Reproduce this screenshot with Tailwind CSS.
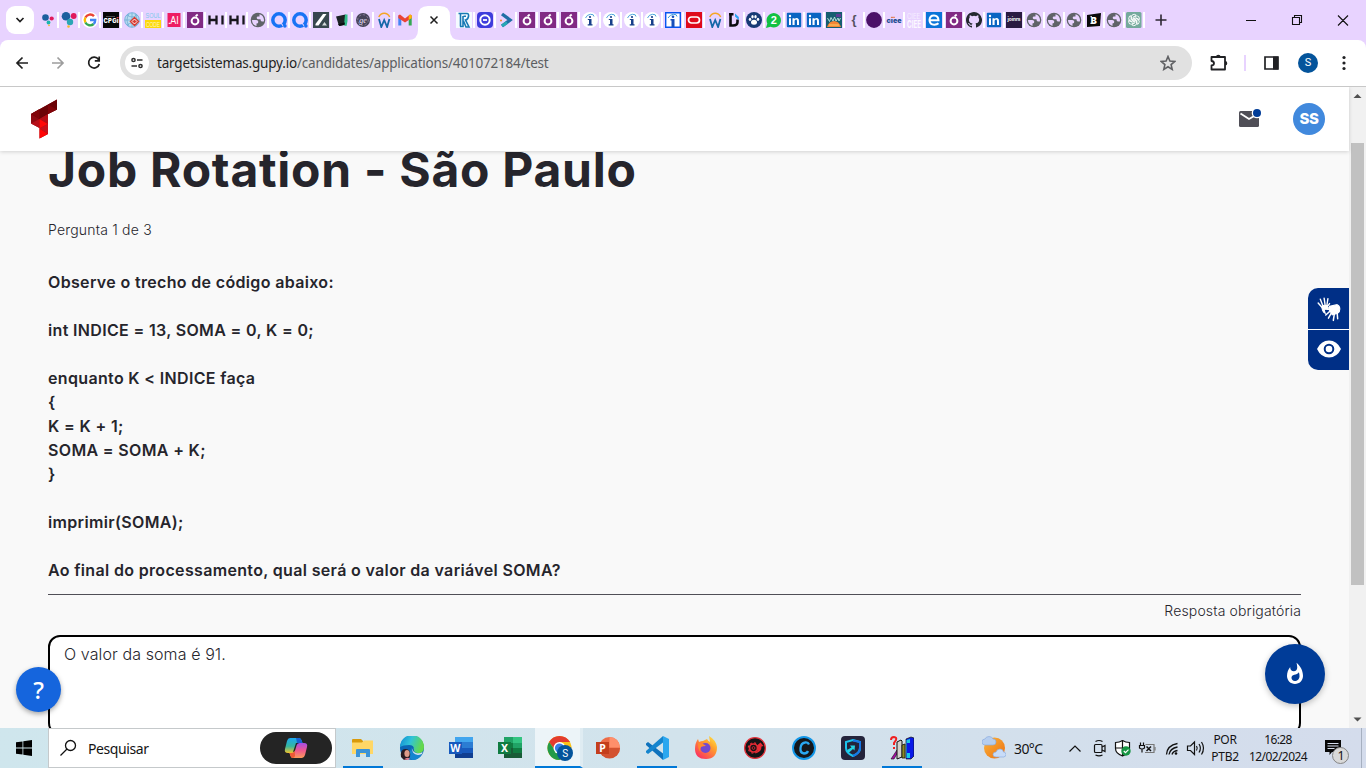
<!DOCTYPE html>
<html lang="pt-BR">
<head>
<meta charset="utf-8">
<title>Job Rotation - São Paulo</title>
<script src="https://cdn.jsdelivr.net/npm/@tailwindcss/browser@4"></script>
</head>
<body class="h-[768px] w-[1366px] overflow-hidden bg-white font-['Inter','Liberation_Sans',sans-serif] text-[#26252c]">

<svg class="hidden">
  <symbol id="dots" viewBox="0 0 16 16"><circle cx="5.500" cy="5.500" r="3.300" fill="#1c5f9e"/><circle cx="11.700" cy="6.500" r="2.100" fill="#e0195b"/><circle cx="8.500" cy="10.500" r="1.900" fill="#19b5b0"/><circle cx="9" cy="13.300" r=".9" fill="#f5b82e"/></symbol>
  <symbol id="dots2" viewBox="0 0 16 16"><circle cx="5" cy="4.300" r="4.300" fill="#1c5f9e"/><circle cx="12.700" cy="4" r="2.900" fill="#e0195b"/><circle cx="9" cy="10" r="3.200" fill="#2ba6b5"/><circle cx="7.500" cy="14.500" r="1.300" fill="#f5b82e"/></symbol>
  <symbol id="google" viewBox="0 0 16 16"><circle cx="8" cy="8" r="8" fill="#fff"/><g fill="none" stroke-width="2.400"><path d="M12 4.200A5.300 5.300 0 0 0 3.400 5.500" stroke="#ea4335"/><path d="M3.400 5.500a5.300 5.300 0 0 0 0 5" stroke="#fbbc05"/><path d="M3.400 10.500a5.300 5.300 0 0 0 8.200 1.500" stroke="#34a853"/><path d="M11.600 12A5.300 5.300 0 0 0 13.200 8H8" stroke="#4285f4"/></g></symbol>
  <symbol id="cpgi" viewBox="0 0 16 16"><path fill="#080808" d="M0 0h16v16H0z"/><path d="M3 4.500h9" stroke="#666" stroke-width=".7"/><text x=".5" y="10.500" font-size="5.800" font-weight="900" fill="#fff" font-family="Inter" textLength="15">CPGi</text><circle cx="14.500" cy="5.800" r=".8" fill="#e33"/></symbol>
  <symbol id="world" viewBox="0 0 16 16"><circle cx="8" cy="8" r="7.300" fill="#b9dcf0" stroke="#5ea7d6" stroke-width=".8"/><path d="M1 8h14M8 1v14M3 3q5 4 10 0M3 13q5-4 10 0M5 2q-4 6 0 12M11 2q4 6 0 12" stroke="#5b9ecb" stroke-width=".6" fill="none"/><path d="m10.500 4.500 5 5-5 5-5-5z" fill="#d93a31"/><path d="m10.500 7 2.500 2.500-2.500 2.500L8 9.500z" fill="none" stroke="#fff" stroke-width=".9"/></symbol>
  <symbol id="soul" viewBox="0 0 16 16"><text x=".5" y="5.800" font-size="7.500" fill="#7fcaec" font-family="Liberation Sans" textLength="15" lengthAdjust="spacingAndGlyphs">SOUL</text><path fill="#fcd90b" d="M0 8h16v8H0z"/><text x="1" y="14.500" font-size="7" fill="#fff6c0" font-family="Liberation Sans" textLength="14" lengthAdjust="spacingAndGlyphs">CODE</text></symbol>
  <symbol id="ai" viewBox="0 0 16 16"><path fill="#ee1d63" d="M1.500 1h13v14h-13z"/><text x="4.200" y="12" font-size="11" fill="#fff" font-family="Liberation Sans" textLength="8.500" lengthAdjust="spacingAndGlyphs">AI</text><path fill="#fff" d="M2.700 10.800h1.200V12H2.700z"/></symbol>
  <symbol id="gupy" viewBox="0 0 16 16"><path fill="#812a84" d="M0 0h16v16H0z"/><circle cx="8" cy="9" r="3.400" fill="none" stroke="#fff" stroke-width="2"/><path d="m8.700 4.200 2-1.700" stroke="#fff" stroke-width="1.900"/></symbol>
  <symbol id="hi" viewBox="0 0 16 16"><path d="M1.500 3.500v9M8.500 3.500v9M1.500 8h7M14.500 3.500v9" stroke="#17151d" stroke-width="2.300"/></symbol>
  <symbol id="globe" viewBox="0 0 16 16"><circle cx="8" cy="8" r="7.300" fill="#5f6368"/><path d="M2 8h4.300q1.900.1 2 1.800T6.500 11.600v2.300Q2 12.700 2 8M9.500 2.200Q13.700 3.300 14 8q0 .8-.2 1.600H12q-1.500-.2-1.500-2.400H8Q6.700 7.100 6.700 5.800T8 4.500h1.500z" fill="#e8d3ff"/></symbol>
  <symbol id="q" viewBox="0 0 16 16"><circle cx="8" cy="8" r="6.200" fill="none" stroke="#1873f5" stroke-width="3.500"/><path d="m9.500 10.500 3.500 4.500" stroke="#e8d3ff" stroke-width="1.100"/><circle cx="13.900" cy="13.900" r="1.800" fill="#1873f5"/></symbol>
  <symbol id="pen" viewBox="0 0 16 16"><path fill="#38474f" d="M0 0h16v16H0z"/><path d="M10 2h3.500L5.500 13.500H2.500V12z" fill="#fff"/><path d="m11.500 10 2.500 3.500H9z" fill="#d6dbde"/></symbol>
  <symbol id="book" viewBox="0 0 16 16"><path d="m2 4.500 9.500-2L13 12l-8 2z" fill="#1c2326"/><path d="m11 2.500 2.500 0 0 6.500-1 5-2.500-.5z" fill="#33c08b"/><path d="m4 12 7-1.500-.5 2.500-5 1z" fill="#0a0f10"/></symbol>
  <symbol id="ge" viewBox="0 0 16 16"><circle cx="8" cy="8" r="7" fill="#454358"/><circle cx="8" cy="8" r="5.300" fill="none" stroke="#9c8fb0" stroke-width=".7" stroke-dasharray="2.500 1.500"/><text x="4.300" y="10.500" font-size="8" font-style="italic" fill="#f0e4ff" font-family="Liberation Serif" textLength="7.500">ge</text></symbol>
  <symbol id="w" viewBox="0 0 16 16"><path d="M2.800 5Q4.700 1.300 8.200 1.300t5.500 3.700" stroke="#f5a623" stroke-width="1.500" fill="none"/><path d="m3 7 2.300 8 2.900-7 2.900 7 2.300-8" stroke="#1568a8" stroke-width="1.800" fill="none"/></symbol>
  <symbol id="gmail" viewBox="0 0 16 16"><path d="M1.300 13.500V4l3 2v7.500z" fill="#4285f4"/><path d="M14.700 13.500V4l-3 2v7.500z" fill="#34a853"/><path d="M1.300 3.300 3 2.500l5 4 5-4 1.700.8V6L8 10.500 1.300 6z" fill="#ea4335"/><path d="M11.700 4 13 2.500l1.700 1V6l-3 2z" fill="#fbbc04"/></symbol>
  <symbol id="r" viewBox="0 0 16 16"><path fill="#f5fbff" d="M0 0h16v16H0z"/><path d="M2.500 1.500H11q2 0 1.500 3T9.500 8l3.500 7h-3L7.500 9M4.500 1.500v13M7 4v10.500H4M7.500 4.200H10" stroke="#1879b4" stroke-width="1.600" fill="none"/></symbol>
  <symbol id="theta" viewBox="0 0 16 16"><rect width="16" height="16" rx="4" fill="#3e3cdc"/><circle cx="8" cy="8" r="4.700" fill="none" stroke="#fff" stroke-width="2"/><path d="M6 8h4" stroke="#fff" stroke-width="1.800"/></symbol>
  <symbol id="chev" viewBox="0 0 16 16"><path d="m4 2 8 6-8 6" stroke="#1e6fa5" stroke-width="3.400" fill="none"/><path d="m9 10.500-5 3.500" stroke="#27a8b5" stroke-width="3"/><circle cx="3" cy="8.500" r="1" fill="#f08a24"/></symbol>
  <symbol id="i" viewBox="0 0 16 16"><circle cx="8" cy="8" r="8" fill="#fff"/><path d="M3.500 6Q5 2.500 8.500 2.300t3.500 2.200" fill="none" stroke="#3b9bd8" stroke-width=".9"/><circle cx="8" cy="5" r="1.100" fill="#173f8a"/><path d="M5.800 7h3.700v5.300h1v1.100H5.700v-1.100h1.300V8.100H5.800z" fill="#173f8a"/></symbol>
  <symbol id="ibox" viewBox="0 0 16 16"><path d="M.7.7h14.600v14.600H.7z" fill="#fff" stroke="#0755f0" stroke-width="1.400"/><path d="M3 6Q5 2.500 8.500 2.300t3.500 2.200" fill="none" stroke="#3b9bd8"/><circle cx="8" cy="4.800" r="1.300" fill="#174fba"/><path d="M5.500 7h4v8H6.500V8.500h-1z" fill="#174fba"/></symbol>
  <symbol id="oracle" viewBox="0 0 16 16"><path fill="#df0a1c" d="M0 0h16v16H0z"/><rect x="2.500" y="5" width="11" height="6" rx="3" fill="none" stroke="#fff" stroke-width="1.700"/></symbol>
  <symbol id="d" viewBox="0 0 16 16"><path d="M4.500 1.500v12H7q4.500 0 4.500-3.500V7.500M3 2.300h4.500" fill="none" stroke="#0b0b0f" stroke-width="2.600"/><path d="m9 1.500 3.800 3.500v3L9 4.500z" fill="#2aa4f4"/></symbol>
  <symbol id="paw" viewBox="0 0 16 16"><circle cx="8" cy="8" r="8" fill="#173a75"/><g fill="#fff"><ellipse cx="8" cy="10.300" rx="3" ry="2.500"/><ellipse cx="4" cy="7.300" rx="1.200" ry="1.600"/><ellipse cx="6.500" cy="4.800" rx="1.200" ry="1.700"/><ellipse cx="9.500" cy="4.800" rx="1.200" ry="1.700"/><ellipse cx="12" cy="7.300" rx="1.200" ry="1.600"/></g></symbol>
  <symbol id="wa" viewBox="0 0 16 16"><path d="M0 16 1.300 11.500A7.200 7.200 0 1 1 4.500 14.700z" fill="#12c143"/><text x="4.700" y="11.800" font-size="11" font-weight="700" fill="#fff" font-family="Liberation Sans">2</text></symbol>
  <symbol id="in" viewBox="0 0 16 16"><rect x=".8" y=".8" width="14.400" height="14.400" rx="1" fill="#0a66c2"/><path d="M3 6.200h2V13H3zM6.500 6.200h2V7q2.500-2 4.200.3.400.7.300 5.700h-2V9q-.2-2-1.500-1.300-.9.300-.9 1.300v4H6.500z" fill="#fff"/><circle cx="4" cy="4" r="1.200" fill="#fff"/></symbol>
  <symbol id="sun" viewBox="0 0 16 16"><path fill="#155e70" d="M0 0h16v16H0z"/><path d="M1 15q2-6 7-6t7 6z" fill="#f58634"/><path d="m1.500 6 2 3.500L5 5.500l2 3.500 1.500-4L10 9l2-3 1 3 1.500-3" stroke="#bfe6df" stroke-width=".9" fill="none"/><path d="M10 2h5v3h-5z" fill="#5a3d95"/><path d="M3 12.500h10v1H3z" fill="#fbd36a"/></symbol>
  <symbol id="brace" viewBox="0 0 16 16"><text x="5.500" y="12" font-size="13" font-weight="700" fill="#55515f" font-family="Liberation Sans">{</text></symbol>
  <symbol id="purple" viewBox="0 0 16 16"><circle cx="8" cy="8" r="7.900" fill="#4b1168"/></symbol>
  <symbol id="ciee" viewBox="0 0 16 16"><text x=".5" y="11" font-size="6.500" font-weight="900" fill="#1e4f93" font-family="Inter" textLength="15" lengthAdjust="spacingAndGlyphs">ciee</text><path d="M5 5.300h4" stroke="#ef7c45"/></symbol>
  <symbol id="cieew" viewBox="0 0 16 16"><text x="1" y="6.500" font-size="7" font-weight="400" fill="#f6efff" font-family="Inter" textLength="13" lengthAdjust="spacingAndGlyphs">CIEE</text><text x="1" y="15.500" font-size="10.500" font-weight="700" fill="#fcf9ff" font-family="Inter" textLength="14" lengthAdjust="spacingAndGlyphs">CIEE</text></symbol>
  <symbol id="e" viewBox="0 0 16 16"><path fill="#0b74d8" d="M0 0h16v16H0z"/><path d="M3.500 8.300h9Q12.300 3.500 8 3.400T3.500 8q0 4.700 4.800 4.700 2.700 0 4.200-1.400" fill="none" stroke="#fff" stroke-width="2"/></symbol>
  <symbol id="gh" viewBox="0 0 16 16"><path fill="#24292f" d="M8 0C3.580 0 0 3.580 0 8c0 3.540 2.290 6.530 5.470 7.590.4.070.550-.17.550-.38 0-.19-.01-.82-.01-1.490-2.010.370-2.530-.49-2.690-.94-.09-.23-.48-.94-.82-1.130-.28-.15-.68-.52-.01-.53.630-.01 1.080.580 1.230.820.720 1.210 1.870.870 2.330.660.070-.52.280-.87.510-1.070-1.780-.2-3.640-.89-3.640-3.950 0-.87.310-1.590.820-2.150-.08-.2-.36-1.020.080-2.120 0 0 .67-.21 2.200.820a7.500 7.500 0 0 1 4 0c1.530-1.040 2.200-.82 2.200-.82.440 1.100.160 1.920.080 2.120.510.560.820 1.270.820 2.150 0 3.070-1.870 3.750-3.650 3.950.290.250.540.730.540 1.480 0 1.070-.01 1.930-.01 2.200 0 .21.150.460.550.380A8 8 0 0 0 8 0"/></symbol>
  <symbol id="joinrs" viewBox="0 0 16 16"><path fill="#2a1b42" d="M0 0h16v16H0z"/><text x="1.500" y="9.300" font-size="4.800" font-weight="700" fill="#fff" font-family="Inter" textLength="13">joinrs</text></symbol>
  <symbol id="b" viewBox="0 0 16 16"><path d="m1 3 14-2-1 13-13 1z" fill="#0a0a0a"/><path d="M4.500 4.700h1.300M4.500 11.300h1.300" stroke="#fff" stroke-width="1.300"/><text x="4.800" y="11.500" font-size="9" font-weight="900" fill="#fff" font-family="Inter">B</text></symbol>
  <symbol id="gpt" viewBox="0 0 16 16"><rect width="15.500" height="16" rx="1.500" fill="#74aa9c"/><g fill="none" stroke="#fff" stroke-width=".9"><g id="petal"><path d="M5.500 7V4.500q.5-2.300 2.700-2.200 1.300.1 2 1L7 5.200v4.300"/></g><use href="#petal" transform="rotate(60 8 8)"/><use href="#petal" transform="rotate(120 8 8)"/><use href="#petal" transform="rotate(180 8 8)"/><use href="#petal" transform="rotate(240 8 8)"/><use href="#petal" transform="rotate(300 8 8)"/></g></symbol>
</svg>

<!-- Tab strip -->
<header class="flex h-10 items-center bg-[#e8d3ff]">
  <button class="ml-[6px] mr-[6px] flex size-7 shrink-0 items-center justify-center rounded-[9px] bg-white"><svg class="size-3" viewBox="0 0 12 12"><path d="m2.500 4 3.500 3.500L9.500 4" fill="none" stroke="#1f1f1f" stroke-width="1.700"/></svg></button>
  <nav class="flex w-[378px] shrink-0 *:mr-[2px] *:h-4 *:w-[19px] *:shrink-0 *:border-r-2 *:border-white [&>svg:last-child]:border-transparent">
    <svg><use href="#dots" width="16" height="16"/></svg><svg><use href="#dots2" width="16" height="16"/></svg><svg><use href="#google" width="16" height="16"/></svg><svg><use href="#cpgi" width="16" height="16"/></svg><svg><use href="#world" width="16" height="16"/></svg><svg><use href="#soul" width="16" height="16"/></svg><svg><use href="#ai" width="16" height="16"/></svg><svg><use href="#gupy" width="16" height="16"/></svg><svg><use href="#hi" width="16" height="16"/></svg><svg><use href="#hi" width="16" height="16"/></svg><svg><use href="#globe" width="16" height="16"/></svg><svg><use href="#q" width="16" height="16"/></svg><svg><use href="#q" width="16" height="16"/></svg><svg><use href="#pen" width="16" height="16"/></svg><svg><use href="#book" width="16" height="16"/></svg><svg><use href="#ge" width="16" height="16"/></svg><svg><use href="#w" width="16" height="16"/></svg><svg><use href="#gmail" width="16" height="16"/></svg>
  </nav>
  <svg class="-ml-[10px] -mr-[12px] h-10 w-[56px] shrink-0" viewBox="0 0 56 40"><path d="M0 40q10 0 10-10V16Q10 6 20 6h12q10 0 10 10v14q0 10 10 10z" fill="#fff"/><path d="m22.500 16.500 7 7m0-7-7 7" stroke="#1f1f1f" stroke-width="1.500"/></svg>
  <nav class="ml-[4px] flex w-[290px] shrink-0 *:mr-[1.950px] *:h-4 *:w-[19px] *:shrink-0 *:border-r-2 *:border-white">
    <svg><use href="#r" width="16" height="16"/></svg><svg><use href="#theta" width="16" height="16"/></svg><svg><use href="#chev" width="16" height="16"/></svg><svg><use href="#gupy" width="16" height="16"/></svg><svg><use href="#gupy" width="16" height="16"/></svg><svg><use href="#gupy" width="16" height="16"/></svg><svg><use href="#i" width="16" height="16"/></svg><svg><use href="#i" width="16" height="16"/></svg><svg><use href="#i" width="16" height="16"/></svg><svg><use href="#i" width="16" height="16"/></svg><svg><use href="#ibox" width="16" height="16"/></svg><svg><use href="#oracle" width="16" height="16"/></svg><svg><use href="#w" width="16" height="16"/></svg><svg class="w-[17px]!"><use href="#d" x="-2" width="16" height="16"/></svg>
  </nav>
  <nav class="flex w-[406px] shrink-0 *:mr-px *:h-4 *:w-[19px] *:shrink-0 *:border-r-2 *:border-white">
    <svg><use href="#paw" width="16" height="16"/></svg><svg><use href="#wa" width="16" height="16"/></svg><svg><use href="#in" width="16" height="16"/></svg><svg><use href="#in" width="16" height="16"/></svg><svg><use href="#sun" width="16" height="16"/></svg><svg><use href="#brace" width="16" height="16"/></svg><svg><use href="#purple" width="16" height="16"/></svg><svg><use href="#ciee" width="16" height="16"/></svg><svg><use href="#cieew" width="16" height="16"/></svg><svg><use href="#e" width="16" height="16"/></svg><svg><use href="#gupy" width="16" height="16"/></svg><svg><use href="#gh" width="16" height="16"/></svg><svg><use href="#in" width="16" height="16"/></svg><svg><use href="#joinrs" width="16" height="16"/></svg><svg><use href="#globe" width="16" height="16"/></svg><svg><use href="#globe" width="16" height="16"/></svg><svg><use href="#globe" width="16" height="16"/></svg><svg><use href="#b" width="16" height="16"/></svg><svg><use href="#globe" width="16" height="16"/></svg><svg><use href="#gpt" width="16" height="16"/></svg>
  </nav>
  <svg class="ml-auto h-10 w-[212px] shrink-0" viewBox="0 0 212 40" fill="none" stroke="#111"><path d="M1.500 20h11M7 14.500v11" stroke="#2c2733" stroke-width="1.600"/><path d="M92 20.500h10M138.500 17.500h7v7h-7zM140.500 17.500v-2h7v7h-2M184 15.500l10 10m0-10-10 10" stroke-width="1.100"/></svg>
</header>

<!-- Toolbar -->
<div class="bg-[#e8d3ff]">
<div class="flex h-[47px] items-center rounded-t-lg border-b border-[#c8c8c8] bg-white">
  <svg class="h-[46px] w-[120px] shrink-0" viewBox="0 0 120 46" fill="none" stroke-width="1.700"><path d="M28 23H17m5.500-5.500L17 23l5.500 5.500" stroke="#1f1f1f"/><path d="M52 23h11m-5.500-5.500L63 23l-5.500 5.500" stroke="#9d9d9d"/><path d="M98.500 19.500a5.400 5.400 0 1 0 .8 4.500M99.200 16.500v4.300h-4.400" stroke="#1f1f1f"/></svg>
  <div class="flex h-[34px] w-[1072px] shrink-0 items-center rounded-full bg-[#e1e1e1] pl-[5px] pr-4">
    <span class="flex size-6 items-center justify-center rounded-full bg-white"><svg class="size-4" viewBox="0 0 16 16" fill="none" stroke="#303030" stroke-width="1.500"><circle cx="4.500" cy="5" r="1.600"/><path d="M8 5h5.500M2.500 11H8"/><circle cx="11.500" cy="11" r="1.600"/></svg></span>
    <span class="ml-2 whitespace-nowrap font-['Noto_Sans',sans-serif] text-[13.500px] tracking-[-0.190px] text-[#1f1f1f]">targetsistemas.gupy.io<span class="text-[#5c5e62]">/candidates/applications/401072184/test</span></span>
    <svg class="ml-auto size-4" viewBox="0 0 16 16"><path d="m8 1.500 1.900 4.500 4.900.4-3.700 3.200 1.100 4.800L8 11.800l-4.200 2.600 1.100-4.800L1.200 6.400 6.100 6z" fill="none" stroke="#5f6063" stroke-width="1.600"/></svg>
  </div>
  <svg class="ml-[17px] size-5" viewBox="0 0 20 20"><path d="M2.500 4H16v12.500H2.500v-4q2.500-.4 2.500-2.300T2.500 8z" fill="none" stroke="#202124" stroke-width="1.800" stroke-linejoin="round"/><path d="M7 4a2.300 2.300 0 0 1 4.600 0zM16 8a2.300 2.300 0 0 1 0 4.600z" fill="#202124"/></svg>
  <span class="ml-[15px] h-4 w-[2px] bg-[#e8d3ff]"></span>
  <svg class="ml-[18px] h-4 w-[15px]" viewBox="0 0 15 16"><path d="M1 2h13v12H1z" fill="#fff" stroke="#202124" stroke-width="1.700"/><path d="M9 1.500h5v13H9z" fill="#202124"/></svg>
  <span class="ml-[19px] flex size-5 items-center justify-center rounded-full bg-[#04549b] font-['Roboto',sans-serif] text-[11px] text-white">S</span>
  <svg class="ml-[23px] h-4 w-[6px]" viewBox="0 0 6 16" fill="#202124"><circle cx="3" cy="2.500" r="1.600"/><circle cx="3" cy="8" r="1.600"/><circle cx="3" cy="13.500" r="1.600"/></svg>
</div>
</div>

<!-- Page viewport -->
<div class="relative flex h-[641px] overflow-hidden bg-[#f9f9f9]">
  <div class="flex w-[1349px] flex-col">
    <div class="z-10 flex h-16 shrink-0 items-center bg-white pl-[30px] pr-6 shadow-[0_1px_4px_rgba(0,0,0,0.16)]">
      <svg class="h-10 w-7" viewBox="0 0 28 40"><path d="M1 15 27 0.500v10L18 15v20l-8.500 4.500V29L1 24.500z" fill="#8e0a12"/><path d="m1 15 26-14.500v10L18 15 9.500 20z" fill="#6b0206"/><path d="m1 15 8.500-5v10zM18 15l0-9.500 9 5z" fill="#810409"/><path d="M9.500 20 18 15v10z" fill="#b30d16"/><path d="m1 24.500 8.500-4.500v9z" fill="#b70f19"/><path d="m9.500 20 8.500 5-8.500 4.500z" fill="#ff0808"/><path d="m9.500 29.500 8.500-4.500v5z" fill="#e20610"/><path d="m18 25v10l-8.500-5.500z" fill="#c9101a"/><path d="m9.500 29.500 8.500 5.500-8.500 4.500z" fill="#ff0505"/></svg>
      <svg class="mb-[4px] ml-auto h-6 w-6" viewBox="0 0 24 24"><rect x="1" y="6" width="20" height="16" rx="1.500" fill="#504f57"/><path d="m2.500 8.500 8.500 5.500 7-4" fill="none" stroke="#fff" stroke-width="1.900"/><circle cx="19" cy="8" r="5.300" fill="#fff"/><circle cx="19" cy="8" r="4" fill="#003c98"/></svg>
      <span class="ml-[31px] flex size-8 items-center justify-center rounded-full bg-[#4189dd] text-[15px] font-extrabold tracking-[-0.300px] text-white">SS</span>
    </div>
    <main class="pl-12 pr-12">
      <h1 class="-mt-[11px] h-[60px] whitespace-nowrap text-[48px] font-bold leading-[60px] tracking-[0.730px]">Job Rotation - São Paulo</h1>
      <p class="mt-[20px] text-[14px] font-light leading-5 tracking-[0.200px]">Pergunta 1 de 3</p>
      <div class="mt-[30px] whitespace-pre-line text-[16px] font-semibold leading-6 tracking-[0.340px]">Observe o trecho de código abaixo:

int INDICE = 13, SOMA = 0, K = 0;

enquanto K &lt; INDICE faça
{
K = K + 1;
SOMA = SOMA + K;
}

imprimir(SOMA);

Ao final do processamento, qual será o valor da variável SOMA?</div>
      <hr class="mt-3 border-[#504f57]">
      <p class="mt-[6px] text-right text-[14px] font-light leading-5 tracking-[0.150px]">Resposta obrigatória</p>
      <div class="mt-[14px] h-[100px] rounded-xl border-2 border-black bg-white px-[14px] py-[5px] text-[16px] font-light leading-6 tracking-[0.100px]">O valor da soma é 91.</div>
    </main>
  </div>
  <!-- Scrollbar -->
  <div class="flex w-[17px] flex-col items-center bg-[#f1f1f1]">
    <svg class="h-[17px] w-[17px]" viewBox="0 0 17 17"><path d="m4.500 11 4-4 4 4z" fill="#505050"/></svg>
    <div class="mt-[39px] h-[442px] w-[13px] bg-[#c1c1c1]"></div>
    <svg class="mt-auto h-[17px] w-[17px]" viewBox="0 0 17 17"><path d="m4.500 6.500 4 4 4-4z" fill="#505050"/></svg>
  </div>
  <!-- Accessibility buttons -->
  <div class="absolute right-[17px] top-[201px] flex h-[82px] w-[41px] flex-col gap-px overflow-hidden rounded-l-[10px] bg-white">
    <div class="flex h-[41px] items-center justify-center bg-[#002f86]"><svg class="size-[26px]" viewBox="0 0 24 24" fill="none" stroke="#fff" stroke-linecap="round"><path d="M5.500 9.500q2-1.500 5-.5v2.500l-3 1 1 3.500q-3-1.500-3-6.500" fill="#fff" stroke-width="1"/><path d="m6 11-4-4.500M6.500 9.500 4 3M8.500 9l-1-7M10 9l1-6.500M10 10.500l2.500-3.500" stroke-width="1.300"/><path d="m12.500 9.500 7-1.500q2.500 1 2.500 4t-2 4l-5 1.500-2.500-4.500z" fill="#fff" stroke-width="1"/><path d="m13 10.500-4.500 1.500 5 .5m0 1-4.500 4m5.500-2.500-3 5.500m5.500-4.500-1 6.500m3.500-7.500.5 6" stroke-width="1.400"/></svg></div>
    <div class="flex h-10 items-center justify-center bg-[#002f86]"><svg class="mb-[2px] h-[18px] w-6" viewBox="0 0 24 18"><path d="M0 9Q4 .5 12 .5T24 9q-4 8.500-12 8.500T0 9" fill="#fff"/><circle cx="12" cy="9" r="4.300" fill="#fff" stroke="#002f86" stroke-width="2"/></svg></div>
  </div>
  <button class="absolute left-4 top-[580px] flex size-[45px] items-center justify-center rounded-full bg-[#1565dd] font-['Noto_Sans',sans-serif] text-[24px] font-medium text-white shadow-[0_2px_5px_rgba(0,0,0,0.35)]">?</button>
  <button class="absolute left-[1265px] top-[557px] flex size-[60px] items-center justify-center rounded-full bg-[#003c98] shadow-[0_2px_6px_rgba(0,0,0,0.25)]"><svg class="size-6" viewBox="0 0 24 24"><path fill="#fff" d="M13.500.670s.740 2.650.740 4.800c0 2.060-1.350 3.730-3.410 3.730-2.070 0-3.630-1.670-3.630-3.730l.030-.360C5.210 7.510 4 10.620 4 14c0 4.420 3.580 8 8 8s8-3.580 8-8C20 8.610 17.410 3.800 13.500.670zM11.710 19c-1.780 0-3.220-1.400-3.220-3.140 0-1.620 1.050-2.760 2.810-3.120 1.770-.360 3.600-1.210 4.620-2.580.390 1.290.590 2.650.590 4.040 0 2.650-2.150 4.800-4.800 4.800z"/></svg></button>
</div>

<!-- Taskbar -->
<footer class="flex h-10 bg-linear-to-r from-[#cfe6ed] via-[#d2e3ec] to-[#d4dcec] font-['Noto_Sans',sans-serif] text-[#141414]">
  <div class="flex w-12 items-center justify-center"><svg class="size-4" viewBox="0 0 16 16"><path d="M0 2.300 6.500 1.400v6.200H0zM7.300 1.300 16 0v7.600H7.300zM0 8.400h6.500v6.200L0 13.700zM7.300 8.400H16V16l-8.700-1.300z"/></svg></div>
  <div class="flex w-[288px] items-center border border-[#c5c9cb] bg-white pl-[10px] pr-[3px]">
    <svg class="size-[18px]" viewBox="0 0 18 18" fill="none" stroke="#111" stroke-width="1.300"><circle cx="11.500" cy="6.500" r="5"/><path d="m8 10-6.500 6.500"/></svg>
    <span class="ml-[11px] text-[14px] tracking-[-0.400px]">Pesquisar</span>
    <span class="ml-auto flex h-8 w-[72px] items-center justify-center rounded-full bg-[#242424]"><svg class="h-[22px] w-6" viewBox="0 0 24 22">
      <defs><linearGradient id="ca" x1="0" y1="0" x2="0" y2="1"><stop stop-color="#1ba8f0"/><stop offset=".55" stop-color="#35b6a0"/><stop offset="1" stop-color="#f2c52c"/></linearGradient><linearGradient id="cb" x1="0" y1="0" x2="0" y2="1"><stop stop-color="#a34de8"/><stop offset=".5" stop-color="#f0588e"/><stop offset="1" stop-color="#fb9b5a"/></linearGradient></defs>
      <path d="M6 1h9q2 0 2.700 2.500L18.500 6H16q-2 0-2.500 2l-1.700 6q-.8 2-3 2H4q-4 0-3-4l2-8q.8-3 3-3" fill="url(#ca)"/><path d="M12 1h3q2 0 2.700 2.500L18.500 6H16q-2 0-2.500 2z" fill="#1761d3"/><path d="M18 21H9q-2 0-2.700-2.500L5.500 16H8q2 0 2.700-2l1.700-6q.8-2 3-2H20q4 0 3 4l-2 8q-.8 3-3 3" fill="url(#cb)"/><path d="M5.500 16H8q2 0 2.700-2l.3 5q-.5 2-2.500 2-1.500-.2-2.200-2.500z" fill="#ee5a35"/><path d="m9 15 3-9h3.500q-2 0-2.800 2l-1.500 5q-.6 2-2.200 2" fill="#242424"/></svg></span>
  </div>
  <nav class="ml-[2px] flex w-[588px] *:flex *:h-10 *:w-[49px] *:items-center *:justify-center">
    <div><span class="flex h-10 w-10 items-center justify-center border-b-2 border-[#0078d7]"><svg class="mt-[2px] h-6 w-6" viewBox="0 0 24 24"><path d="M1 4q0-1 1-1h8l2 2v4H1z" fill="#d99a0b"/><path d="M1 6.500h10l2-2h9V18H1z" fill="#ffd766"/><path d="M5 21v-7q0-1 1-1h12q1 0 1 1v7h-4v-4H9v4z" fill="#3c93d6"/></svg></span></div>
    <div><svg class="size-6" viewBox="0 0 24 24"><defs><linearGradient id="ed" x1="0" y1="0" x2="1" y2=".3"><stop stop-color="#0e8ad6"/><stop offset=".5" stop-color="#31c3d7"/><stop offset="1" stop-color="#64d84b"/></linearGradient></defs><circle cx="12" cy="12" r="12" fill="#0b66b5"/><path d="M0 11A12 12 0 0 1 24 11q0 7-7 6-4-1-3-4 0-4-5-4-6 0-9 2" fill="url(#ed)"/><path d="M12 11q-2 6 5 8 3 0 5-1-3 6-10 6-5-3-2-9z" fill="#1685d0"/><path d="M13.500 11.500q-2 4 2.500 5.500 4 1 6.500-1l-.5 2q-5 2-8-.500t-.5-6" fill="#d1e5ed"/><path d="M1 21q-1-8 4.500-8 5.500 0 4.500 8l-3 3H4z" fill="#281b22"/><ellipse cx="7" cy="17.500" rx="2.600" ry="3.500" fill="#dc9a88"/><path d="M4 23.500q3-3 6-1l-2 1.500z" fill="#df7f91"/></svg></div>
    <div><svg class="h-6 w-6" viewBox="0 0 24 24"><path d="M6 1h18v6H6z" fill="#41a5ee"/><path d="M6 6h18v6H6z" fill="#2b7cd3"/><path d="M6 12h18v5H6z" fill="#185abd"/><path d="M6 17h18v5H6z" fill="#103f91"/><path d="M0 6h13v12H0z" fill="#185abd"/><text x="1.300" y="15.800" font-size="10.500" font-weight="700" fill="#fff" font-family="Noto Sans">W</text></svg></div>
    <div><svg class="h-6 w-6" viewBox="0 0 24 24"><path d="M6 1h9v7H6z" fill="#21a366"/><path d="M15 1h9v7h-9z" fill="#33c481"/><path d="M6 7h9v6H6z" fill="#107c41"/><path d="M15 7h9v6h-9z" fill="#21a366"/><path d="M6 12h18v10H6z" fill="#185c37"/><path d="M15 12h9v5h-9z" fill="#107c41"/><path d="M0 6h13v12H0z" fill="#107c41"/><text x="3" y="15.800" font-size="10.500" font-weight="700" fill="#fff" font-family="Noto Sans">X</text></svg></div>
    <div class="ml-px w-[48px]! border-r-[3px] border-b-2 border-r-[#dfecf2] border-b-[#0078d7] bg-[#ecf4f8] pl-[4px]"><svg class="mt-px size-[26px]" viewBox="0 0 26 26"><circle cx="12.500" cy="13" r="12" fill="#fbc116"/><path d="M2.100 7A12 12 0 0 1 23 7H12.500L8 15z" fill="#e33b2e"/><path d="M2.100 7A12 12 0 0 0 12.500 25l5-9-9 0z" fill="#229a49"/><circle cx="12.500" cy="13" r="6" fill="#fff"/><circle cx="12.500" cy="13" r="4.600" fill="#397ee8"/><circle cx="18" cy="18" r="8" fill="#04549b"/><text x="15.200" y="21.700" font-size="10" fill="#fff" font-family="Roboto">S</text></svg></div>
    <div><svg class="h-6 w-6" viewBox="0 0 24 24"><circle cx="13.500" cy="11.500" r="10.500" fill="#ed6c47"/><path d="M13.500 1A10.500 10.500 0 0 1 24 11.500H13.500z" fill="#ff8f6b"/><path d="M3 12h21a10.500 10.500 0 0 1-21 0" fill="#d35230"/><path d="M0 6h13v12H0z" fill="#c43e1c"/><text x="3.300" y="15.800" font-size="10.500" font-weight="700" fill="#fff" font-family="Noto Sans">P</text></svg></div>
    <div><span class="flex h-10 w-10 items-center justify-center border-b-2 border-[#0078d7]"><svg class="mt-[2px] size-6" viewBox="0 0 24 24"><path d="m18 0 6 3v18l-6 3z" fill="#2ba7ef"/><path d="m1 7.500 2-1.500L18 17.500V24L1 9z" fill="#0e72bd"/><path d="m1 16.500 2 1.500L18 6.500V0L1 15z" fill="#1585ce"/></svg></span></div>
    <div><svg class="size-6" viewBox="0 0 24 24"><defs><linearGradient id="ff" x1="1" y1="0" x2=".2" y2="1"><stop stop-color="#fff04a"/><stop offset=".4" stop-color="#ffa02c"/><stop offset="1" stop-color="#fb2e62"/></linearGradient></defs><path d="M13 3q1 2 3 3l-1-6q7 4 8 11 0 12-11 12T1 13q0-6 3-10l1 3q2-1 4-1z" fill="url(#ff)"/><circle cx="11.500" cy="12" r="5" fill="#7249cf"/><path d="M4 7q5 0 8 3-3 0-5 1-2 3 0 5-3-1-3-9" fill="#ff8a30"/></svg></div>
    <div><svg class="size-6" viewBox="0 0 24 24"><circle cx="12" cy="12" r="10.400" fill="#141416" stroke="#e2323b" stroke-width="1.300"/><circle cx="10.500" cy="12" r="4" fill="none" stroke="#e62b35" stroke-width="1.700"/><circle cx="10.500" cy="12" r="5.200" fill="none" stroke="#e62b35" stroke-width="1.200" stroke-dasharray="2 2.100"/><circle cx="10.500" cy="12" r="1.400" fill="none" stroke="#e62b35" stroke-width=".8"/><path d="m14 9.500 3.500-3 3 3.500-2 .5q0 5-5 6.500 2-4 1.500-7" fill="#e62b35"/></svg></div>
    <div><svg class="size-6" viewBox="0 0 24 24"><circle cx="12" cy="12" r="11" fill="#15171b" stroke="#1397e8" stroke-width="1.900"/><path d="M17 8.500q-1-2.500-4-2-4 .5-4.500 5.500T12 17.500q3 0 4-2.500" fill="none" stroke="#2aa8f2" stroke-width="2.300"/></svg></div>
    <div><svg class="size-6" viewBox="0 0 24 24"><rect width="24" height="24" rx="4" fill="#24243b"/><path d="m12 4 7 2v6q0 5-7 8-7-3-7-8V6z" fill="none" stroke="#1bc4ee" stroke-width="2"/><path d="M12 4.500 19 6v6q0 5-7 8" fill="none" stroke="#1676e8" stroke-width="2"/><path d="m6 14 4.500-2.500L9 9.500l5 0-.5 5-1.500-1.500-4.500 4z" fill="#25d4e5"/></svg></div>
    <div><span class="flex h-10 w-10 items-center justify-center border-b-2 border-[#0078d7]"><svg class="mt-[2px] size-6" viewBox="0 0 24 24"><path d="m1 23 6-9 1 2-4 7z" fill="#a50fa4" stroke="#111" stroke-width=".6"/><path d="M1 4q0-3 3-3 3 .2 2 3L4 7v2m0 2v2" fill="none" stroke="#f02020" stroke-width="2"/><path d="m7 6 4-2 1 1v16l-5 2z" fill="#d3d3cc" stroke="#111"/><path d="m12 9 3-1v14h-3z" fill="#8b8b22" stroke="#111" stroke-width=".8"/><path d="m16 3 5-2 3 1v18l-3 3h-5z" fill="#0919e8" stroke="#111" stroke-width=".7"/><path d="M16.500 4 20 3v19h-3.500z" fill="#17c8e8"/><path d="M17 7h3v10h-3z" fill="#0919e8"/></svg></span></div>
  </nav>
  <div class="ml-auto flex w-[384px] items-center">
    <svg class="size-6" viewBox="0 0 24 24"><defs><linearGradient id="sn" x1="0" y1="0" x2="1" y2="1"><stop stop-color="#fbb53d"/><stop offset="1" stop-color="#ec6f10"/></linearGradient></defs><circle cx="12.500" cy="12" r="10.500" fill="url(#sn)"/><path d="M3 9q-3 0-3-3t3-3q1-2.500 4-2.500T11 3q3 0 3 3t-3 3z" fill="#b6ceef" stroke="#8daee0" stroke-width=".7"/><path d="M14 21q-3 0-3-2.500t3-2.500q1-3 4-3t3.500 3q2.500.3 2.500 2.500T21.500 21z" fill="#c8dcf8" stroke="#8daee0" stroke-width=".7"/></svg>
    <span class="ml-[8px] w-[30px] whitespace-nowrap text-[14px] tracking-[-0.600px]">30°C</span>
    <svg class="ml-[21px] h-10 w-[142px] shrink-0" viewBox="0 0 142 40" fill="none" stroke="#111" stroke-width="1.200"><path d="m4.500 23.500 5.500-5.500 5.500 5.500"/><rect x="29.500" y="16.500" width="7.500" height="8" rx="1"/><path d="m37 19 3-1.500v6L37 22M30.500 13.500q3.500-2 7 0M30.500 27q3.500 1.800 7 0"/><path d="M57.500 12.500q3 2 7 2v6q0 5-7 7.500-7-2.500-7-7.500v-6q4 0 7-2" fill="#fff"/><path d="M57.500 12.500V28m-7-8h14"/><circle cx="61" cy="23" r="4.700" fill="#169543" stroke="none"/><path d="m58.800 23 1.700 1.700 3-3" stroke="#fff"/><path d="M75.500 14.500v3m3-3v3m-4 0h5v2.500q-2.500 2-5 0zM77 21.500v3"/><path d="M80.500 16.500h8.500v8h-9" stroke="#777"/><path d="M90 19v3.500" stroke="#777"/><path d="m81.500 18.500 4.500 4.500m0-4.500L81.500 23" stroke-width="1.500"/><path d="M101.500 26.500q.5-9 11-11M104 26.500q1-6 8.500-7.500M107 26.500q1-3.500 5.500-4" stroke-width="1.300"/><circle cx="111" cy="25.500" r="1.300" fill="#111" stroke="none"/><path d="M122.500 18h3l4-4v12.500l-4-4h-3zM131.500 18q1.500 2.300 0 4.500m2.500-6.500q2.800 4.200 0 8.500m2.500-10.500q4 6.200 0 12.500" /></svg>
    <div class="ml-px w-[34px] whitespace-nowrap text-center text-[12px] leading-[17px] tracking-[-0.300px]">POR<br>PTB2</div>
    <div class="ml-[3px] w-[66px] whitespace-nowrap text-center text-[12px] leading-[17px] tracking-[-0.600px]">16:28<br>12/02/2024</div>
    <svg class="ml-[13px] h-10 w-[30px] shrink-0" viewBox="0 0 30 40"><path d="M1 12h16v12h-9l-2.500 3v-3H1z" fill="#080808"/><path d="M3.500 15.500h11m-11 2.500h11m-11 2.500h7" stroke="#d4dcec" stroke-width="1"/><circle cx="16.500" cy="27.500" r="8" fill="#d9d9d9" stroke="#858585"/><text x="13.500" y="32" font-size="12.500" fill="#111" font-family="Noto Sans">1</text></svg>
    <span class="ml-auto mr-1 h-10 w-px bg-[#a6b0c0]"></span>
  </div>
</footer>
</body>
</html>
